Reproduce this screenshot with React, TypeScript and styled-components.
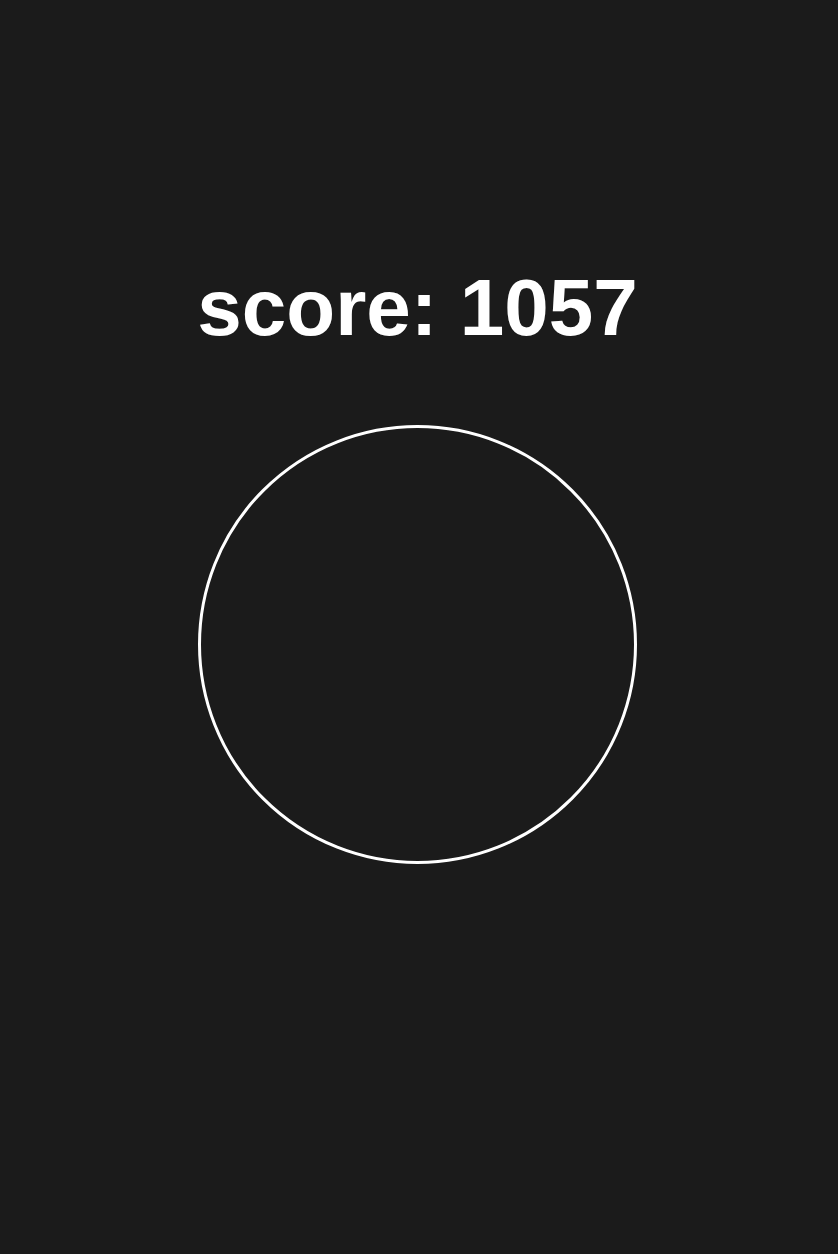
import React from "react";
import styled, { createGlobalStyle } from "styled-components";

const Global = createGlobalStyle`
  html, body { margin: 0; padding: 0; background: #1b1b1b; }
  body { font-family: "Liberation Sans", Arial, sans-serif; }
`;

const Page = styled.main`
  min-height: 1254px;
  display: flex;
  flex-direction: column;
  align-items: center;
  padding: 268px 3px 0 0;
  box-sizing: border-box;
`;

const Score = styled.h1`
  margin: 0;
  font-size: 80px;
  line-height: 80px;
  font-weight: 700;
  color: #ffffff;
  white-space: nowrap;
`;

const Ring = styled.div`
  margin-top: 77px;
  width: 439px;
  height: 439px;
  box-sizing: border-box;
  border: 3px solid #ffffff;
  border-radius: 50%;
`;

export default function App() {
  return (
    <>
      <Global />
      <Page>
        <Score>score: 1057</Score>
        <Ring />
      </Page>
    </>
  );
}
